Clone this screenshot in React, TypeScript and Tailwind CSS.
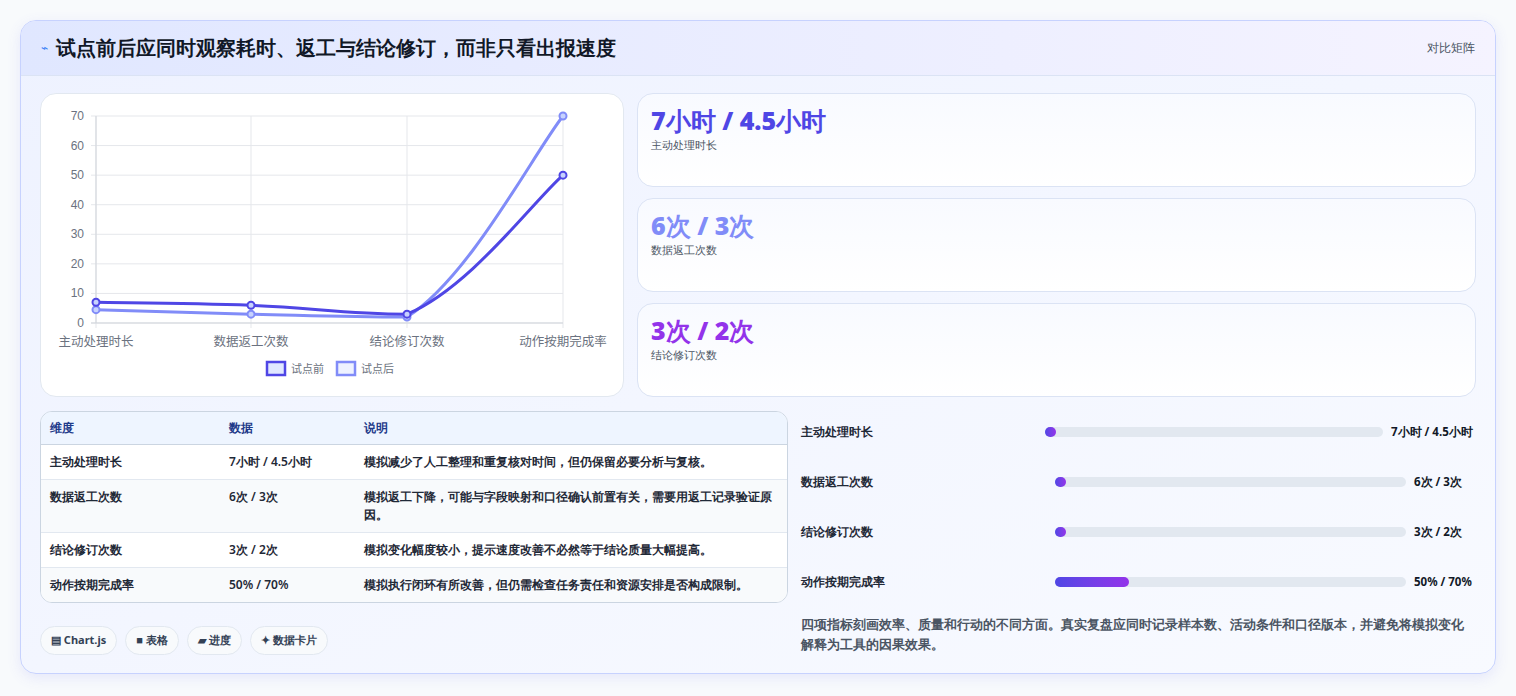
import React from "react";

const X = [95, 250, 406, 562];
const yv = (v: number) => 322 - (v * 207) / 70;
function path(vals: number[]) {
  const p = vals.map((v, i) => [X[i], yv(v)]);
  let d = `M${p[0][0]},${p[0][1]}`;
  const cl = (v: number, a: number, b: number) => Math.min(Math.max(v, Math.min(a, b)), Math.max(a, b));
  for (let i = 0; i < p.length - 1; i++) {
    const p0 = p[i - 1] || p[i], p1 = p[i], p2 = p[i + 1], p3 = p[i + 2] || p2;
    const t = 0.2;
    const c1x = p1[0] + (p2[0] - p0[0]) * t, c1y = cl(p1[1] + (p2[1] - p0[1]) * t, p1[1], p2[1]);
    const c2x = p2[0] - (p3[0] - p1[0]) * t, c2y = cl(p2[1] - (p3[1] - p1[1]) * t, p1[1], p2[1]);
    d += ` C${c1x},${c1y} ${c2x},${c2y} ${p2[0]},${p2[1]}`;
  }
  return d;
}
const before = [7, 6, 3, 50];
const after = [4.5, 3, 2, 70];

function Chart() {
  return (
    <svg width="582" height="302" viewBox="40 93 582 302" className="block">
      {[0, 10, 20, 30, 40, 50, 60, 70].map((v) => (
        <g key={v}>
          <line x1={90} x2={562} y1={yv(v)} y2={yv(v)} stroke="#e5e7eb" strokeWidth="1" />
          <text x={83} y={yv(v) + 4} textAnchor="end" fontSize="12" fill="#6b7280" fontFamily="Liberation Sans, sans-serif">{v}</text>
        </g>
      ))}
      {X.map((x) => (
        <line key={x} x1={x} x2={x} y1={115} y2={327} stroke="#e5e7eb" strokeWidth="1" />
      ))}
      <line x1={95} x2={95} y1={115} y2={322} stroke="#d1d5db" />
      <line x1={90} x2={562} y1={322} y2={322} stroke="#d1d5db" />
      {["主动处理时长", "数据返工次数", "结论修订次数", "动作按期完成率"].map((l, i) => (
        <text key={l} x={X[i]} y={345} textAnchor="middle" fontSize="12.5" fill="#6b7280" fontFamily="Noto Sans CJK SC, sans-serif">{l}</text>
      ))}
      <path d={path(after)} fill="none" stroke="#818cf8" strokeWidth="3" />
      <path d={path(before)} fill="none" stroke="#4f46e5" strokeWidth="3" />
      {after.map((v, i) => <circle key={"a" + i} cx={X[i]} cy={yv(v)} r="3.5" fill="#c7d2fe" stroke="#818cf8" strokeWidth="2" />)}
      {before.map((v, i) => <circle key={"b" + i} cx={X[i]} cy={yv(v)} r="3.5" fill="#c7d2fe" stroke="#4f46e5" strokeWidth="2" />)}
      <rect x={266} y={361} width={18} height={13} fill="#e0e7ff" stroke="#4f46e5" strokeWidth="2.5" />
      <text x={290} y={371.5} fontSize="11" fill="#6b7280" fontFamily="Noto Sans CJK SC, sans-serif">试点前</text>
      <rect x={336} y={361} width={18} height={13} fill="#eef2ff" stroke="#818cf8" strokeWidth="2.5" />
      <text x={360} y={371.5} fontSize="11" fill="#6b7280" fontFamily="Noto Sans CJK SC, sans-serif">试点后</text>
    </svg>
  );
}

const stats = [
  { v: "7小时 / 4.5小时", l: "主动处理时长", c: "text-[#4f46e5]" },
  { v: "6次 / 3次", l: "数据返工次数", c: "text-[#818cf8]" },
  { v: "3次 / 2次", l: "结论修订次数", c: "text-[#9333ea]" },
];
const rows = [
  ["主动处理时长", "7小时 / 4.5小时", "模拟减少了人工整理和重复核对时间，但仍保留必要分析与复核。"],
  ["数据返工次数", "6次 / 3次", "模拟返工下降，可能与字段映射和口径确认前置有关，需要用返工记录验证原因。"],
  ["结论修订次数", "3次 / 2次", "模拟变化幅度较小，提示速度改善不必然等于结论质量大幅提高。"],
  ["动作按期完成率", "50% / 70%", "模拟执行闭环有所改善，但仍需检查任务责任和资源安排是否构成限制。"],
];
const bars = [
  { l: "主动处理时长", v: "7小时 / 4.5小时", w: 3, g: "grid-cols-[236px_338px_1fr]" },
  { l: "数据返工次数", v: "6次 / 3次", w: 3, g: "grid-cols-[246px_351px_1fr]" },
  { l: "结论修订次数", v: "3次 / 2次", w: 3, g: "grid-cols-[246px_351px_1fr]" },
  { l: "动作按期完成率", v: "50% / 70%", w: 21, g: "grid-cols-[246px_351px_1fr]" },
];

export default function App() {
  return (
    <div className="min-h-[696px] bg-[#f8fafc] p-5 font-['Noto_Sans_CJK_SC',sans-serif]">
      <div className="h-[654px] overflow-hidden rounded-2xl border border-[#c7d2fe] bg-gradient-to-br from-[#eef2ff] to-[#f8faff] shadow-[0_4px_14px_rgba(99,102,241,0.12)]">
        <div className="flex h-[55px] items-center justify-between border-b border-[#dbe3f4] bg-gradient-to-r from-[#e0e7ff] to-[#f5f3ff] px-5">
          <div className="flex items-center gap-2">
            <span className="text-[12px] text-[#3b82f6]">⌁</span>
            <h1 className="text-[20px] font-black text-[#111827]">试点前后应同时观察耗时、返工与结论修订，而非只看出报速度</h1>
          </div>
          <span className="text-[12px] text-[#4b5563]">对比矩阵</span>
        </div>
        <div className="px-[19px] pt-[17px]">
          <div className="flex gap-[13px]">
            <div className="h-[304px] w-[584px] overflow-hidden rounded-2xl border border-[#e2e8f0] bg-white">
              <Chart />
            </div>
            <div className="flex flex-1 flex-col gap-[11px]">
              {stats.map((s) => (
                <div key={s.l} className="h-[94px] rounded-2xl border border-[#dbe3f4] bg-gradient-to-b from-[#f8faff] to-white px-[13px] pt-[9px]">
                  <div className={`text-[25px] font-black leading-[34px] ${s.c}`}>{s.v}</div>
                  <div className="text-[11px] text-[#4b5563]">{s.l}</div>
                </div>
              ))}
            </div>
          </div>
          <div className="mt-[14px] flex gap-[13px]">
            <div className="w-[748px]">
              <div className="overflow-hidden rounded-xl border border-[#cbd5e1] bg-white text-[12px]">
                <div className="grid h-[33px] grid-cols-[179px_135px_1fr] items-center border-b border-[#cbd5e1] bg-[#eef5ff] px-[9px] font-bold text-[#1e3a8a]">
                  <span>维度</span><span>数据</span><span>说明</span>
                </div>
                {rows.map((r, i) => (
                  <div key={r[0]} className={`grid grid-cols-[179px_135px_1fr] items-start px-[9px] py-[8px] leading-[18px] font-semibold text-[#1f2937] ${i < 3 ? "border-b border-[#e2e8f0]" : ""} ${i % 2 === 1 ? "bg-[#f8fafc]" : "bg-white"}`}>
                    <span>{r[0]}</span><span>{r[1]}</span><span>{r[2]}</span>
                  </div>
                ))}
              </div>
              <div className="mt-[23px] flex gap-2">
                {["▤ Chart.js", "■ 表格", "▰ 进度", "✦ 数据卡片"].map((p) => (
                  <span key={p} className="flex h-[29px] items-center rounded-full border border-[#e2e8f0] bg-[#f8fafc] px-[10px] text-[11px] font-bold text-[#334155]">{p}</span>
                ))}
              </div>
            </div>
            <div className="flex-1 pt-[11px]">
              {bars.map((b) => (
                <div key={b.l} className={`grid h-[50px] items-start ${b.g} gap-2 text-[12px] font-semibold text-[#1f2937]`}>
                  <span className="leading-[20px]">{b.l}</span>
                  <div className="mt-[5px] h-[10px] rounded-full bg-[#e2e8f0]">
                    <div className="h-full min-w-[11px] rounded-full bg-gradient-to-r from-[#4f46e5] to-[#9333ea]" style={{ width: `${b.w}%` }} />
                  </div>
                  <span className="whitespace-nowrap text-[11.5px] font-bold leading-[20px] text-[#111827]">{b.v}</span>
                </div>
              ))}
              <p className="-mt-[7px] pr-[4px] text-[12.5px] font-semibold leading-[20px] text-[#4b5563]">四项指标刻画效率、质量和行动的不同方面。真实复盘应同时记录样本数、活动条件和口径版本，并避免将模拟变化解释为工具的因果效果。</p>
            </div>
          </div>
        </div>
      </div>
    </div>
  );
}
